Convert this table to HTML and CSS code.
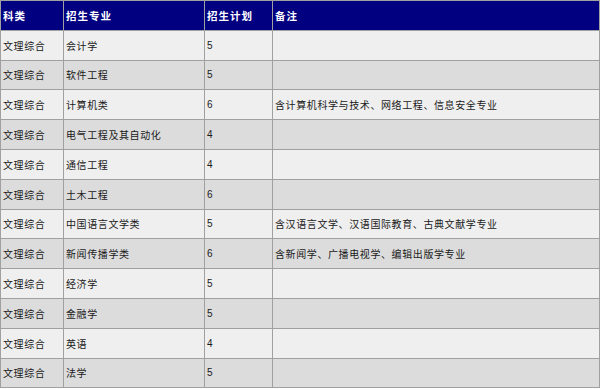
FILE: index.html
```html
<!DOCTYPE html>
<html lang="zh">
<head>
<meta charset="utf-8">
<title>招生计划</title>
<link rel="stylesheet" href="styles.css">
</head>
<body>
<table class="plan">
  <colgroup>
    <col class="c1"><col class="c2"><col class="c3"><col class="c4">
  </colgroup>
  <thead>
    <tr><th>科类</th><th>招生专业</th><th>招生计划</th><th>备注</th></tr>
  </thead>
  <tbody>
    <tr><td>文理综合</td><td>会计学</td><td>5</td><td></td></tr>
    <tr><td>文理综合</td><td>软件工程</td><td>5</td><td></td></tr>
    <tr><td>文理综合</td><td>计算机类</td><td>6</td><td>含计算机科学与技术、网络工程、信息安全专业</td></tr>
    <tr><td>文理综合</td><td>电气工程及其自动化</td><td>4</td><td></td></tr>
    <tr><td>文理综合</td><td>通信工程</td><td>4</td><td></td></tr>
    <tr><td>文理综合</td><td>土木工程</td><td>6</td><td></td></tr>
    <tr><td>文理综合</td><td>中国语言文学类</td><td>5</td><td>含汉语言文学、汉语国际教育、古典文献学专业</td></tr>
    <tr><td>文理综合</td><td>新闻传播学类</td><td>6</td><td>含新闻学、广播电视学、编辑出版学专业</td></tr>
    <tr><td>文理综合</td><td>经济学</td><td>5</td><td></td></tr>
    <tr><td>文理综合</td><td>金融学</td><td>5</td><td></td></tr>
    <tr><td>文理综合</td><td>英语</td><td>4</td><td></td></tr>
    <tr><td>文理综合</td><td>法学</td><td>5</td><td></td></tr>
  </tbody>
</table>
</body>
</html>
```
FILE: styles.css
```css
html, body {
  margin: 0;
  padding: 0;
  background: #ffffff;
}
.plan {
  border-collapse: collapse;
  table-layout: fixed;
  width: 599px;
  font-family: "Liberation Sans", "Noto Sans CJK SC", sans-serif;
  font-size: 10px;
  letter-spacing: 0.6px;
  color: #1a1a1a;
}
.c1 { width: 63px; }
.c2 { width: 141px; }
.c3 { width: 68px; }
.c4 { width: 327px; }
.plan th, .plan td {
  border: 1px solid #a0a0a0;
  padding: 0 0 0 2px;
  height: 28.8px;
  text-align: left;
  vertical-align: middle;
  white-space: nowrap;
  overflow: hidden;
}
.plan th {
  background: #000080;
  color: #ffffff;
  font-weight: bold;
  font-size: 10.5px;
  letter-spacing: 1px;
}
.plan tbody tr:nth-child(odd) td { background: #efefef; }
.plan tbody tr:nth-child(even) td { background: #dcdcdc; }
```
